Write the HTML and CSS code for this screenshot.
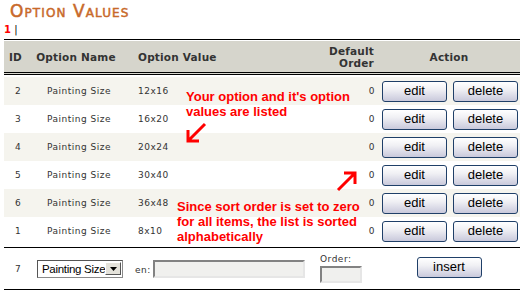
FILE: index.html
```html
<!DOCTYPE html>
<html lang="en">
<head>
  <meta charset="UTF-8" />
  <title>Option Values</title>
  <link rel="stylesheet" href="styles.css">
</head>
<body>
  <h1 class="title">Option Values</h1>
  <div class="pager"><span class="current">1</span> |</div>

  <div class="panel">
    <table class="values">
      <colgroup>
        <col class="c-id"><col class="c-name"><col class="c-value"><col class="c-order"><col class="c-action">
      </colgroup>
      <thead>
        <tr>
          <th class="id">ID</th>
          <th class="name">Option Name</th>
          <th class="value">Option Value</th>
          <th class="order">Default<br>Order</th>
          <th class="action">Action</th>
        </tr>
      </thead>
      <tbody>
        <tr class="alt">
          <td class="id">2</td><td class="name">Painting Size</td><td class="value">12x16</td><td class="order">0</td>
          <td class="action"><button class="btn">edit</button><button class="btn">delete</button></td>
        </tr>
        <tr>
          <td class="id">3</td><td class="name">Painting Size</td><td class="value">16x20</td><td class="order">0</td>
          <td class="action"><button class="btn">edit</button><button class="btn">delete</button></td>
        </tr>
        <tr class="alt">
          <td class="id">4</td><td class="name">Painting Size</td><td class="value">20x24</td><td class="order">0</td>
          <td class="action"><button class="btn">edit</button><button class="btn">delete</button></td>
        </tr>
        <tr>
          <td class="id">5</td><td class="name">Painting Size</td><td class="value">30x40</td><td class="order">0</td>
          <td class="action"><button class="btn">edit</button><button class="btn">delete</button></td>
        </tr>
        <tr class="alt">
          <td class="id">6</td><td class="name">Painting Size</td><td class="value">36x48</td><td class="order">0</td>
          <td class="action"><button class="btn">edit</button><button class="btn">delete</button></td>
        </tr>
        <tr>
          <td class="id">1</td><td class="name">Painting Size</td><td class="value">8x10</td><td class="order">0</td>
          <td class="action"><button class="btn">edit</button><button class="btn">delete</button></td>
        </tr>
      </tbody>
      <tfoot>
        <tr>
          <td class="id">7</td>
          <td colspan="3">
            <div class="new-row">
              <span class="select"><span class="select-text">Painting Size</span><span class="caret"><svg width="7" height="4" viewBox="0 0 7 4"><path d="M0 0h7L3.5 4z" fill="#000"/></svg></span></span>
              <label class="lang" for="newval">en:</label>
              <input class="field" id="newval" type="text">
              <div class="order-box">
                <label for="neworder">Order:</label>
                <input class="field small" id="neworder" type="text">
              </div>
            </div>
          </td>
          <td class="insert"><button class="btn">insert</button></td>
        </tr>
      </tfoot>
    </table>

    <!-- annotations drawn over the table -->
    <div class="note note-top">Your option and it's option<br>values are listed</div>
    <svg class="arrow arrow-down" width="22" height="22" viewBox="0 0 22 22">
      <path d="M20 2L3 19M3 8v11h11" stroke="#f00" stroke-width="3" fill="none"/>
    </svg>
    <svg class="arrow arrow-up" width="22" height="22" viewBox="0 0 22 22">
      <path d="M2 20L19 3M8 3h11v11" stroke="#f00" stroke-width="3" fill="none"/>
    </svg>
    <div class="note note-bottom">Since sort order is set to zero<br>for all items, the list is sorted<br>alphabetically</div>
  </div>
</body>
</html>
```

FILE: styles.css
```css
body {
  margin: 0;
  padding: 0;
  background: #fff;
  font-family: "DejaVu Sans", Verdana, sans-serif;
  color: #333;
}
.title {
  margin: 0;
  padding: 1px 0 0 10px;
  height: 23px;
  font-size: 17px;
  line-height: 20px;
  font-weight: normal;
  font-variant: small-caps;
  letter-spacing: 1.1px;
  color: #c8692a;
  -webkit-text-stroke: 0.5px #c8692a;
}
.pager {
  padding-left: 4px;
  height: 15px;
  font-size: 10px;
  line-height: 12px;
  color: #000;
}
.pager .current {
  color: #f00;
  font-weight: bold;
}
.panel {
  position: relative;
  width: 516px;
  margin-left: 4px;
}
.values {
  width: 516px;
  border-collapse: separate;
  border-spacing: 0;
  table-layout: fixed;
  font-size: 9px;
  border-top: 1px solid #000;
}
.c-id { width: 26px; }
.c-name { width: 98px; }
.c-value { width: 150px; }
.c-order { width: 100px; }
.c-action { width: 142px; }
.values thead tr {
  height: 35px;
}
.values th {
  padding: 0;
  background: #d6d5cc;
  color: #333;
  font-size: 10.5px;
  font-weight: bold;
  letter-spacing: 0.2px;
  line-height: 12px;
  border-top: 1px solid #fff;
  border-bottom: 3px double #000;
}
.values tbody tr {
  height: 28px;
}
.values tbody tr:first-child,
.values tbody tr:last-child {
  height: 30px;
}
.values tbody tr:first-child td {
  border-top: 2px solid #fff;
}
.values tbody tr:last-child td {
  border-bottom: 2px solid #fff;
}
.values td {
  padding: 0;
  letter-spacing: 0.5px;
}
.values tr.alt td {
  background: #f5f4ee;
}
.values .id {
  padding-left: 11px;
  text-align: left;
}
.values th.id {
  padding-left: 5px;
}
.values .name {
  text-align: center;
}
.values th.name {
  padding-right: 6px;
}
.values .value {
  padding-left: 10px;
  text-align: left;
}
.values .order {
  padding-right: 4px;
  text-align: right;
}
.values td.order {
  padding-right: 3px;
}
.values .action {
  text-align: center;
}
.values td.action {
  text-align: left;
  padding-left: 4px;
  white-space: nowrap;
}
.btn {
  width: 65px;
  height: 21px;
  margin-right: 6px;
  padding: 0 0 1px;
  border: 1px solid #1f3f68;
  border-radius: 3px;
  background: linear-gradient(to bottom, #ffffff 0%, #f0f0f4 40%, #d9d9e6 75%, #c9c9db 100%);
  font-family: "Liberation Sans", Arial, sans-serif;
  font-size: 13px;
  color: #000;
  vertical-align: middle;
}
.btn:last-child {
  margin-right: 0;
}
.values tfoot tr {
  height: 43px;
}
.values tfoot td {
  border-top: 1px solid #000;
  border-bottom: 1px solid #000;
}
.insert .btn {
  display: block;
  margin: 0 auto 3px;
}
.new-row {
  display: flex;
  align-items: center;
  height: 41px;
  padding-left: 7px;
}
.select {
  display: flex;
  align-items: center;
  box-sizing: border-box;
  width: 86px;
  height: 18px;
  padding: 0 1px 0 4px;
  border: 1px solid #8a8a8a;
  border-top-color: #555;
  border-left-color: #555;
  background: #fff;
  font-family: "Liberation Sans", Arial, sans-serif;
  font-size: 11.5px;
  letter-spacing: -0.3px;
  color: #000;
  white-space: nowrap;
  overflow: hidden;
}
.select-text {
  flex: 1;
}
.caret {
  display: flex;
  align-items: center;
  justify-content: center;
  flex: none;
  box-sizing: border-box;
  width: 16px;
  height: 13px;
  border: 1px solid;
  border-color: #fff #555 #555 #fff;
  background: #e4e2da;
}
.lang {
  margin-left: 12px;
  width: 18px;
  font-size: 9px;
  padding-top: 2px;
}
.field {
  box-sizing: border-box;
  width: 152px;
  height: 18px;
  margin: 0;
  border: 2px solid;
  border-color: #828282 #e6e6e6 #e6e6e6 #828282;
  background: #f0f0ee;
}
.order-box {
  display: flex;
  flex-direction: column;
  margin-left: 15px;
  font-size: 9px;
}
.order-box label {
  height: 12px;
  line-height: 10px;
}
.field.small {
  width: 42px;
  height: 17px;
}
.note {
  position: absolute;
  font-family: "Liberation Sans", Arial, sans-serif;
  font-size: 13px;
  font-weight: bold;
  line-height: 15px;
  color: #f00;
}
.note-top {
  left: 182px;
  top: 50px;
}
.note-bottom {
  left: 173px;
  top: 160px;
}
.arrow {
  position: absolute;
}
.arrow-down {
  left: 181px;
  top: 83px;
}
.arrow-up {
  left: 332px;
  top: 131px;
}
```
